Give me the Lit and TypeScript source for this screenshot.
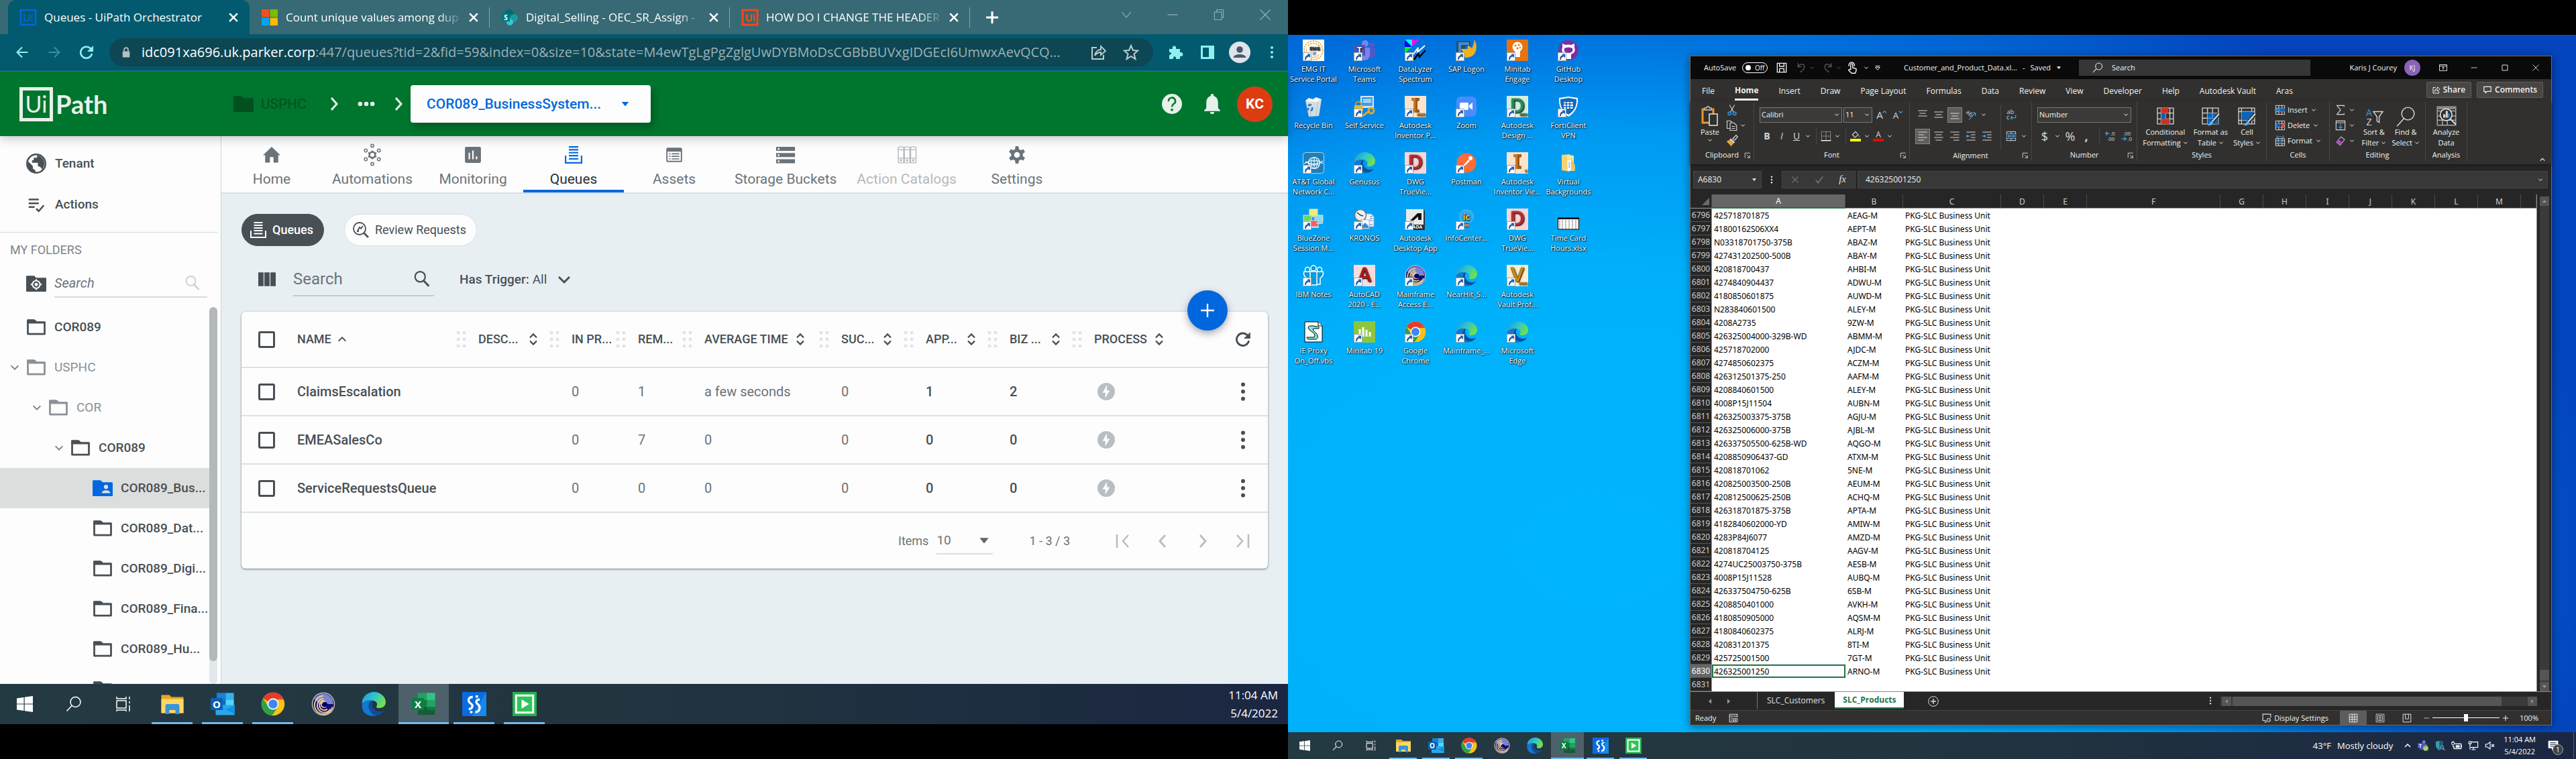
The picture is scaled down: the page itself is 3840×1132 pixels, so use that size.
import { LitElement, html, svg, css, nothing } from "lit";
import { customElement, property } from "lit/decorators.js";
import { classMap } from "lit/directives/class-map.js";

/* ------------------------------------------------------------------ icons */

const shape: Record<string, any> = {
  x: svg`<path d="M5 5L19 19M19 5L5 19" fill="none" stroke="currentColor" stroke-width="3"/>`,
  thinX: svg`<path d="M3 3L21 21M21 3L3 21" fill="none" stroke="currentColor" stroke-width="1.6"/>`,
  plus: svg`<path d="M12 3V21M3 12H21" fill="none" stroke="currentColor" stroke-width="3"/>`,
  thinPlus: svg`<path d="M12 2V22M2 12H22" fill="none" stroke="currentColor" stroke-width="2.4"/>`,
  min: svg`<path d="M3 12H21" stroke="currentColor" stroke-width="1.6"/>`,
  restore: svg`<path d="M4 7H17V21H4ZM8 7V3H20V17H17" fill="none" stroke="currentColor" stroke-width="1.4"/>`,
  max: svg`<path d="M4 4H20V20H4Z" fill="none" stroke="currentColor" stroke-width="1.8"/>`,
  winDown: svg`<path d="M4 7L12 17L20 7" fill="none" stroke="currentColor" stroke-width="1.4"/>`,
  down: svg`<path d="M4 8L12 16L20 8" fill="none" stroke="currentColor" stroke-width="3"/>`,
  up: svg`<path d="M4 16L12 8L20 16" fill="none" stroke="currentColor" stroke-width="3"/>`,
  right: svg`<path d="M8 3L16 12L8 21" fill="none" stroke="currentColor" stroke-width="3"/>`,
  left: svg`<path d="M16 3L8 12L16 21" fill="none" stroke="currentColor" stroke-width="3"/>`,
  first: svg`<path d="M21 3L13 12L21 21M4 2V22" fill="none" stroke="currentColor" stroke-width="2.6"/>`,
  last: svg`<path d="M3 3L11 12L3 21M20 2V22" fill="none" stroke="currentColor" stroke-width="2.6"/>`,
  sort: svg`<path d="M6 9L12 3L18 9M6 15L12 21L18 15" fill="none" stroke="currentColor" stroke-width="2.8"/>`,
  caret: svg`<path d="M3 7H21L12 18Z" fill="currentColor"/>`,
  caretUp: svg`<path d="M3 18H21L12 7Z" fill="currentColor"/>`,
  caretLeft: svg`<path d="M17 3V21L7 12Z" fill="currentColor"/>`,
  caretRight: svg`<path d="M7 3V21L17 12Z" fill="currentColor"/>`,
  back: svg`<path d="M22 12H3M12 3L3 12L12 21" fill="none" stroke="currentColor" stroke-width="2.4"/>`,
  forward: svg`<path d="M2 12H21M12 3L21 12L12 21" fill="none" stroke="currentColor" stroke-width="2.4"/>`,
  reload: svg`<path d="M20 14A8.5 8.5 0 1 1 18 6.5L21 9.5" fill="none" stroke="currentColor" stroke-width="2.6"/><path d="M22 2V11H13Z" fill="currentColor"/>`,
  lock: svg`<path d="M5 10H19V22H5Z" fill="currentColor"/><path d="M8 10V7A4 4 0 0 1 16 7V10" fill="none" stroke="currentColor" stroke-width="2.4"/>`,
  share: svg`<path d="M9 5H2V22H19V16" fill="none" stroke="currentColor" stroke-width="2"/><path d="M6 17C7 11 11 8 15 8V3L22 10L15 16V12C11 12 8 14 6 17Z" fill="none" stroke="currentColor" stroke-width="1.8"/>`,
  star: svg`<path d="M12 2L15 9L22 9.5L16.500 14.500L18.500 22L12 18L5.500 22L7.500 14.500L2 9.500L9 9Z" fill="none" stroke="currentColor" stroke-width="2"/>`,
  puzzle: svg`<path d="M3 7H8C6 1 15 1 13 7H19V12C25 11 25 19 19 18V22H13C14 17 8 17 9 22H3V16C7 16 7 11 3 12Z" fill="currentColor"/>`,
  sidepanel: svg`<path d="M2 2H22V22H2Z" fill="currentColor"/><path d="M5 5H14V19H5Z" fill="#035a6e"/>`,
  profile: svg`<circle cx="12" cy="12" r="12" fill="#dfe3ea"/><circle cx="12" cy="9" r="3.600" fill="#4d586c"/><path d="M5 18C5 13 19 13 19 18Z" fill="#4d586c"/>`,
  kebab: svg`<circle cx="12" cy="3.500" r="2.400" fill="currentColor"/><circle cx="12" cy="12" r="2.400" fill="currentColor"/><circle cx="12" cy="20.500" r="2.400" fill="currentColor"/>`,
  dots: svg`<circle cx="3.500" cy="12" r="3" fill="currentColor"/><circle cx="12" cy="12" r="3" fill="currentColor"/><circle cx="20.500" cy="12" r="3" fill="currentColor"/>`,
  help: svg`<circle cx="12" cy="12" r="12" fill="#e6f1ea"/><path d="M8 9A4 4 0 1 1 14 12C12.500 13 12 13.500 12 15.500" fill="none" stroke="#00752d" stroke-width="2"/><circle cx="12" cy="19" r="1.500" fill="#00752d"/>`,
  bell: svg`<path d="M12 0C14 0 13.500 2 14 2.500C18 4 19 7 19 11V17L21.500 19.500V20.500H2.500V19.500L5 17V11C5 7 6 4 10 2.500C10.500 2 10 0 12 0Z" fill="#e6f1ea"/><path d="M9.500 21.500H14.500A2.500 2.500 0 0 1 9.500 21.500Z" fill="#e6f1ea"/>`,
  folder: svg`<path d="M2 4H10L12 6H22V20H2Z" fill="none" stroke="currentColor" stroke-width="2.200" stroke-linejoin="round"/><path d="M1 3Q1 2.500 2 2.500H9.500L12 5.500H22V7.500H1Z" fill="currentColor"/>`,
  folderFill: svg`<path d="M0 3.500Q0 2.500 1 2.500H9.500L12 5H23Q24 5 24 6V20.500Q24 21.500 23 21.500H1Q0 21.500 0 20.500Z" fill="currentColor"/>`,
  folderUser: svg`<path d="M0 3.500Q0 2.500 1 2.500H9.500L12 5H23Q24 5 24 6V20.500Q24 21.500 23 21.500H1Q0 21.500 0 20.500Z" fill="#0067df"/><circle cx="16" cy="10.500" r="2.500" fill="#dcdddd"/><path d="M11 18C11 13.500 21 13.500 21 18Z" fill="#dcdddd"/>`,
  folderTarget: svg`<path d="M0 3.500Q0 2.500 1 2.500H9.500L12 5H23Q24 5 24 6V20.500Q24 21.500 23 21.500H1Q0 21.500 0 20.500Z" fill="currentColor"/><circle cx="12" cy="13" r="4.500" fill="none" stroke="#fdfdfd" stroke-width="1.500"/><circle cx="12" cy="13" r="2" fill="#fdfdfd"/><path d="M12 6.500V9M12 17V19.500M5.500 13H8M16 13H18.500" stroke="#fdfdfd" stroke-width="1.500"/>`,
  globe: svg`<circle cx="12" cy="12" r="11" fill="none" stroke="currentColor" stroke-width="2"/><path d="M2 9L8 15V18L11 20V23C5 22 1 17 2 9ZM13 2V5H9V8H7V11H14V15L17 16L19 19C24 13 22 4 13 2Z" fill="currentColor"/>`,
  actions: svg`<path d="M3 6H15M3 10.500H15M3 15H10" stroke="currentColor" stroke-width="2"/><path d="M12 17L15 20L21 13" fill="none" stroke="currentColor" stroke-width="2"/>`,
  search: svg`<circle cx="9.500" cy="9" r="7" fill="none" stroke="currentColor" stroke-width="2"/><path d="M14.500 14.500L21.500 22" stroke="currentColor" stroke-width="2.800"/>`,
  searchThin: svg`<circle cx="14.500" cy="9" r="7.500" fill="none" stroke="currentColor" stroke-width="1.500"/><path d="M9 14.500L1.500 22.500" stroke="currentColor" stroke-width="1.600"/>`,
  home: svg`<path d="M12 1L24 12.500H21V22.500H14.500V15H9.500V22.500H3V12.500H0Z" fill="currentColor"/>`,
  automations: svg`<circle cx="12" cy="12" r="4" fill="none" stroke="currentColor" stroke-width="2.400"/><path d="M12 6V8M12 16V18M6.500 9L9 10.500M15 13.500L17.500 15M6.500 15L9 13.500M15 10.500L17.500 9" stroke="currentColor" stroke-width="2"/><g fill="none" stroke="currentColor" stroke-width="1.400"><circle cx="12" cy="-0.500" r="2"/><circle cx="12" cy="24.500" r="2"/><circle cx="3" cy="6" r="2"/><circle cx="21" cy="6" r="2"/><circle cx="3" cy="18" r="2"/><circle cx="21" cy="18" r="2"/></g>`,
  monitoring: svg`<rect x="1" y="1" width="22" height="22" rx="2" fill="currentColor"/><path d="M7 9V18M12 6V18M17 14V18" stroke="#fdfdfd" stroke-width="2"/>`,
  queues: svg`<path d="M1 13V23H23V13" fill="none" stroke="currentColor" stroke-width="2"/><path d="M5.500 1H18.500M5.500 5H18.500M5.500 9H18.500M5.500 13H18.500M5.500 17.500H18.500" stroke="currentColor" stroke-width="2"/>`,
  assets: svg`<rect x="2" y="3" width="20" height="18" rx="1.500" fill="none" stroke="currentColor" stroke-width="1.800"/><path d="M2 3H22V7.500H2Z" fill="currentColor"/><path d="M5 10.500H7M5 14H7M5 17.500H7M8.500 10.500H19M8.500 14H19M8.500 17.500H19" stroke="currentColor" stroke-width="1.500"/>`,
  storage: svg`<path d="M-1 1H25V6.500H-1ZM-1 9.500H25V15H-1ZM-1 18H25V23.500H-1Z" fill="currentColor"/><path d="M1.500 2.500H3.500V5H1.500ZM1.500 11H3.500V13.500H1.500ZM1.500 19.500H3.500V22H1.500Z" fill="#fff"/>`,
  catalogs: svg`<g fill="none" stroke="currentColor" stroke-width="1.300"><rect x="0" y="1" width="7.500" height="22" rx="1"/><rect x="8.500" y="1" width="7.500" height="22" rx="1"/><rect x="17" y="1" width="7.500" height="22" rx="1"/><path d="M0 5H24M0 16.500H24"/><circle cx="3.700" cy="19.500" r="1"/><circle cx="12.200" cy="19.500" r="1"/><circle cx="20.700" cy="19.500" r="1"/></g>`,
  gear: svg`<path d="M10 0H14L14.700 4.200L17.200 5.600L20.800 4.200L23 8L20 10.300V13.700L23 16L20.800 19.800L17.200 18.400L14.700 19.800L14 24H10L9.300 19.800L6.800 18.400L3.200 19.800L1 16L4 13.700V10.300L1 8L3.200 4.200L6.800 5.600L9.300 4.200Z" fill="currentColor"/><circle cx="12" cy="12" r="4" fill="#fdfdfd"/>`,
  review: svg`<circle cx="10" cy="10" r="9" fill="none" stroke="currentColor" stroke-width="1.800"/><path d="M16.500 16.500L23 23" stroke="currentColor" stroke-width="2.600"/><path d="M7 13L10 8L12 10L15 6M6 14H8V12" fill="none" stroke="currentColor" stroke-width="1.800"/>`,
  columns: svg`<path d="M0 2H7.300V21H0ZM8.400 2H15.600V21H8.400ZM16.700 2H24V21H16.700Z" fill="currentColor"/>`,
  bolt: svg`<circle cx="12" cy="12" r="12" fill="#b9bec3"/><path d="M13 3L7 13.500H11L10.500 21L17 10.500H13Z" fill="#fdfdfd"/>`,
  uiBlue: svg`<rect x="1" y="1" width="22" height="22" fill="none" stroke="#0067df" stroke-width="2.500"/><text x="12" y="18" font-size="16" font-family="Lato, sans-serif" text-anchor="middle" fill="#0067df">Ui</text>`,
  uiRed: svg`<rect x="1" y="1" width="22" height="22" fill="none" stroke="#fa4616" stroke-width="3"/><text x="12" y="18" font-size="15" font-weight="700" font-family="Lato, sans-serif" text-anchor="middle" fill="#fa4616">Ui</text>`,
  ms: svg`<path d="M0 0H11.400V11.400H0Z" fill="#f25022"/><path d="M12.600 0H24V11.400H12.600Z" fill="#7fba00"/><path d="M0 12.600H11.400V24H0Z" fill="#00a4ef"/><path d="M12.600 12.600H24V24H12.600Z" fill="#ffb900"/>`,
  sharepoint: svg`<circle cx="11" cy="7" r="7" fill="#036c70"/><circle cx="18" cy="13" r="6" fill="#1a9ba1"/><circle cx="12" cy="19" r="5" fill="#37c6d0"/><rect x="0" y="6" width="12" height="12" rx="1" fill="#03787c"/><text x="6" y="16" font-size="10" font-weight="700" font-family="Open Sans, sans-serif" text-anchor="middle" fill="#fff">S</text>`,

  win: svg`<path d="M0 3.500L10.500 2V11.500H0ZM11.700 1.800L24 0V11.500H11.700ZM0 12.600H10.500V22L0 20.500ZM11.700 12.600H24V24L11.700 22.200Z" fill="#fff"/>`,
  taskview: svg`<path d="M3 7H17V18H3ZM3 1V4H17V1M3 23V21H17V23M22 1V5M22 8V11M22 14V23" fill="none" stroke="#fff" stroke-width="1.500"/>`,
  explorer: svg`<path d="M1 3H9L11 5H23V21H1Z" fill="#e9a820"/><path d="M1 7H23V21H1Z" fill="#ffd862"/><path d="M5 22V14Q5 12 7 12H17Q19 12 19 14V22H15V18H9V22Z" fill="#3b95dd"/>`,
  outlook: svg`<path d="M6 1H23V21H6Z" fill="#0f6cbd"/><path d="M6 1H15V8H6Z" fill="#1b80cf"/><path d="M15 1H23V8H15Z" fill="#35b1ee"/><path d="M15 8H23V14H15Z" fill="#50d9ff"/><path d="M5 13L24 13V22Q24 23 23 23H6Q5 23 5 22Z" fill="#28a8ea"/><path d="M5 13L24 22V13L14 18Z" fill="#1490df"/><rect x="0" y="6" width="12" height="12" rx="1" fill="#0a5fb4"/><text x="6" y="16" font-size="10" font-weight="700" font-family="Open Sans, sans-serif" text-anchor="middle" fill="#fff">O</text>`,
  chrome: svg`<circle cx="12" cy="12" r="11.500" fill="#fbc116"/><path d="M12 12L2 6.300A11.500 11.500 0 0 1 22 6.300H12Z" fill="#e33b2e"/><path d="M2 6.300A11.500 11.500 0 0 0 11 23.500L17 14.500L12 12L6.500 13.500Z" fill="#2da04a"/><path d="M12 6.300H22.200L22 7.500H12Z" fill="#e33b2e"/><circle cx="12" cy="12" r="5.600" fill="#fff"/><circle cx="12" cy="12" r="4.500" fill="#3f86f4"/>`,
  swirl: svg`<circle cx="12" cy="12" r="11.500" fill="#c3bcc2"/><circle cx="12" cy="12" r="10.500" fill="#10106e"/><path d="M3 7A10.500 10.500 0 0 1 21 7L22 12H8Z" fill="#7d84cf"/><g fill="none" stroke="#e8c98e" stroke-width="1.300"><path d="M21 15A9 9 0 1 1 12 4"/><path d="M19 17A7 7 0 1 1 12 6.500"/><path d="M16 17A4.800 4.800 0 1 1 13 8.500"/><path d="M15 14A2.800 2.800 0 1 1 14 10"/></g><circle cx="13.500" cy="12.500" r="2.500" fill="#00006e"/>`,
  edge: svg`<defs><linearGradient id="eg" x1="0" y1="0" x2="1" y2="0.500"><stop offset="0" stop-color="#1f8fdc"/><stop offset="0.500" stop-color="#2cc3d2"/><stop offset="1" stop-color="#6fe04f"/></linearGradient></defs><path d="M0.500 12C0 4 7 0 12 0C19 0 24 5 24 10C24 14 21 16 17.500 16C14 16 14.500 14.500 15.300 13.500C16 11 14 8.500 10.500 8.500C6 8.500 1 10 0.500 12Z" fill="url(#eg)"/><path d="M0.500 13C1 9.500 6 7.500 10 8.500C7.500 10 6.500 13 7.500 16.500C8.500 20.500 12 23 15 23.500C6 25.500 -0.500 20 0.500 13Z" fill="#1277d3"/><path d="M10 8.500C6.500 11 6.500 18 11 21.500C15 24.500 20 22.500 22.500 18.500C18.500 20.500 13.500 19.500 11.500 16C10 13.500 10 10.500 11.500 9Z" fill="#0d4f9c"/>`,
  excel: svg`<path d="M6 1H23V23H6Z" fill="#21a366"/><path d="M15 1H23V8H15Z" fill="#33c481"/><path d="M6 8H15V15H6Z" fill="#107c41"/><path d="M15 8H23V15H15Z" fill="#21a366"/><path d="M6 15H23V23H6Z" fill="#185c37"/><path d="M15 15H23V18H15Z" fill="#107c41"/><rect x="0" y="6" width="12" height="12" rx="1" fill="#107c41"/><text x="6" y="16" font-size="10" font-weight="700" font-family="Open Sans, sans-serif" text-anchor="middle" fill="#fff">X</text>`,
  assistant: svg`<rect width="24" height="24" fill="#0a6be0"/><path d="M24 0V24H10Z" fill="#1489ee"/><path d="M10.500 5C6 5 5 9 8.500 11.500C11.500 13.500 10 17 6.500 17" fill="none" stroke="#fff" stroke-width="2.200"/><path d="M17.500 7.500C13.500 7.500 13 10.500 15.800 12.500C18.500 15 17.500 20 13 20" fill="none" stroke="#fff" stroke-width="2.200"/><circle cx="14.500" cy="4.500" r="1.400" fill="#fff"/><circle cx="9" cy="20" r="1.400" fill="#fff"/>`,
  player: svg`<rect width="24" height="24" fill="#22b14c"/><rect x="3.500" y="3.500" width="17" height="17" fill="#2fc45c" stroke="#fff" stroke-width="2"/><path d="M9 7.500V16.500L16.500 12Z" fill="#fff"/>`,

  /* tray */
  trayTeams: svg`<circle cx="14" cy="4" r="3.500" fill="#7b83eb"/><rect x="4" y="8" width="17" height="13" rx="3" fill="#5059c9"/><rect x="0" y="6" width="12" height="12" rx="1" fill="#4b53bc"/><text x="6" y="16" font-size="10" font-weight="700" font-family="Open Sans, sans-serif" text-anchor="middle" fill="#fff">T</text><circle cx="18" cy="18" r="6" fill="#92c353"/><path d="M15 18L17.500 20.500L21 16" fill="none" stroke="#fff" stroke-width="1.500"/>`,
  trayShield: svg`<path d="M3 3Q10 0 19 3V12Q18 19 11 23Q4 19 3 12Z" fill="#2f9fb5"/><path d="M11 1.500Q15 1.500 19 3V12Q18 19 11 23Z" fill="#155f74"/><circle cx="17" cy="16" r="3.500" fill="none" stroke="#9ad" stroke-width="1.500"/><path d="M19.500 18.500L23 22" stroke="#9ad" stroke-width="2"/>`,
  battery: svg`<path d="M8 8H22V19H6V13M23 11V16" fill="none" stroke="#fff" stroke-width="1.800"/><path d="M10 11H19V17H10Z" fill="#fff"/><path d="M1 5H7V9Q4 12 1 9ZM2.500 2V5M5.500 2V5M4 10V15H6" fill="none" stroke="#fff" stroke-width="1.500"/>`,
  network: svg`<path d="M6 4H22V16H6M12 16V21M8 21H17M2 3H7V8H2ZM4.500 8V21" fill="none" stroke="#fff" stroke-width="1.700"/>`,
  mute: svg`<path d="M2 9H6L12 4V20L6 15H2Z" fill="none" stroke="#fff" stroke-width="1.700"/><path d="M15 9L21 15M21 9L15 15" stroke="#fff" stroke-width="1.700"/>`,
  notif: svg`<path d="M1 1H23V18H14L9 23V18H1Z" fill="#fff"/><path d="M5 5.500H19M5 9.500H19M5 13.500H15" stroke="#1b2a3c" stroke-width="1.600"/>`,

  /* excel */
  save: svg`<path d="M2 2H22V22H2ZM7 22V14H17V22M7 2V9H17V2" fill="none" stroke="currentColor" stroke-width="2"/>`,
  undo: svg`<path d="M5 2V10H13M5 10C9 2 20 3 19 10C19 15 15 19 9 22" fill="none" stroke="currentColor" stroke-width="2"/>`,
  redo: svg`<path d="M19 2V10H11M19 10C15 2 4 3 5 10C5 15 9 19 15 22" fill="none" stroke="currentColor" stroke-width="2"/>`,
  touch: svg`<path d="M9 16V6Q9 4 11 4Q13 4 13 6V12L20 14V18L18 23H11L5 17Q6 14 9 16M6 9A5.500 5.500 0 1 1 16 9" fill="none" stroke="currentColor" stroke-width="1.900"/>`,
  qat: svg`<path d="M4 6H20" stroke="currentColor" stroke-width="2.600"/><path d="M4 11H20L12 20Z" fill="none" stroke="currentColor" stroke-width="2.200"/>`,
  ribbonMode: svg`<path d="M1 3H23V21H1ZM1 7H23M12 18V10M8.500 13L12 10L15.500 13" fill="none" stroke="currentColor" stroke-width="1.800"/>`,
  comment: svg`<path d="M3 4H21V16H11L7 20V16H3Z" fill="none" stroke="currentColor" stroke-width="2"/>`,
  paste: svg`<path d="M3 5H19V25H3Z" fill="none" stroke="#e8962e" stroke-width="3"/><path d="M6 6V3H9C9 0 13 0 13 3H16V6Z" fill="#31302e" stroke="#c8c6c4" stroke-width="1.300"/><path d="M13 12H25V29H13Z" fill="#31302e" stroke="#e8e6e4" stroke-width="1.500"/>`,
  cut: svg`<path d="M7 2L15 16M17 2L9 16" stroke="#d8d6d4" stroke-width="1.500"/><circle cx="7" cy="19" r="3" fill="none" stroke="#3a96dd" stroke-width="2"/><circle cx="17" cy="19" r="3" fill="none" stroke="#3a96dd" stroke-width="2"/>`,
  copy: svg`<path d="M8 18H2V3H9L12 6M8 7H16L21 12V22H8ZM11 14H18M11 18H18" fill="none" stroke="#d8d6d4" stroke-width="1.500"/>`,
  painter: svg`<path d="M13 8L20 1L23 4L17 11Z" fill="none" stroke="#d8d6d4" stroke-width="1.700"/><path d="M9 7L18 15L15 17L7 10Z" fill="#d8d6d4"/><path d="M7 10L1 13L10 23L15 17Z" fill="#e8a33e"/>`,
  growA: svg`<text x="9" y="21" font-size="23" font-family="Open Sans, sans-serif" text-anchor="middle" fill="#d8d6d4">A</text><path d="M16 8L20 4L24 8" fill="none" stroke="#3a96dd" stroke-width="2"/>`,
  shrinkA: svg`<text x="9" y="21" font-size="20" font-family="Open Sans, sans-serif" text-anchor="middle" fill="#d8d6d4">A</text><path d="M16 4L20 8L24 4" fill="none" stroke="#3a96dd" stroke-width="2"/>`,
  borders: svg`<path d="M2 2H22M2 12H22M2 2V22M12 2V22M22 2V22" fill="none" stroke="#d8d6d4" stroke-width="1.500" stroke-dasharray="1.500 1.500"/><path d="M1 22H23" stroke="#fff" stroke-width="2"/>`,
  fill: svg`<path d="M5 9L12 2L18 9L11 15Z" fill="none" stroke="#d8d6d4" stroke-width="1.600"/><path d="M17 9Q22 12 20 15" fill="none" stroke="#3a96dd" stroke-width="2"/><path d="M0 18H24V24H0Z" fill="#ff0"/>`,
  fontColor: svg`<text x="12" y="15" font-size="18" font-family="Open Sans, sans-serif" text-anchor="middle" fill="#d8d6d4">A</text><path d="M0 18H24V24H0Z" fill="#f00"/>`,
  alTop: svg`<path d="M2 3H22M5 9H19M2 15H22" stroke="#d8d6d4" stroke-width="1.600"/>`,
  alMid: svg`<path d="M2 6H22M5 12H19M2 18H22" stroke="#d8d6d4" stroke-width="1.600"/>`,
  alBot: svg`<path d="M2 9H22M5 15H19M2 21H22" stroke="#d8d6d4" stroke-width="1.600"/>`,
  alLeft: svg`<path d="M2 3H22M2 9H15M2 15H22M2 21H15" stroke="#d8d6d4" stroke-width="1.600"/>`,
  alCenter: svg`<path d="M2 3H22M5 9H19M2 15H22M5 21H19" stroke="#d8d6d4" stroke-width="1.600"/>`,
  alRight: svg`<path d="M2 3H22M9 9H22M2 15H22M9 21H22" stroke="#d8d6d4" stroke-width="1.600"/>`,
  outdent: svg`<path d="M2 3H22M12 9H22M12 15H22M2 21H22" stroke="#d8d6d4" stroke-width="1.600"/><path d="M10 12H2M5 9L2 12L5 15" fill="none" stroke="#3a96dd" stroke-width="2"/>`,
  indent: svg`<path d="M2 3H22M12 9H22M12 15H22M2 21H22" stroke="#d8d6d4" stroke-width="1.600"/><path d="M1 12H9M6 9L9 12L6 15" fill="none" stroke="#3a96dd" stroke-width="2"/>`,
  orient: svg`<text x="8" y="13" font-size="13" font-family="Open Sans, sans-serif" text-anchor="middle" fill="#d8d6d4" transform="rotate(45 8 10)">ab</text><path d="M8 23L22 8M15 8H22V15" fill="none" stroke="#3a96dd" stroke-width="2"/>`,
  wrap: svg`<text x="10" y="11" font-size="14" font-family="Open Sans, sans-serif" text-anchor="middle" fill="#d8d6d4">ab</text><text x="5" y="23" font-size="14" font-family="Open Sans, sans-serif" text-anchor="middle" fill="#d8d6d4">c</text><path d="M22 12V19H12M15 15L11 19L15 23" fill="none" stroke="#3a96dd" stroke-width="2"/>`,
  merge: svg`<path d="M2 2H22V22H2ZM2 7H22M2 17H22M12 2V7M12 17V22" fill="none" stroke="#d8d6d4" stroke-width="1.500"/><path d="M2 7H22V17H2Z" fill="#1b4d78"/><path d="M5 12H19M8 9.500L5 12L8 14.500M16 9.500L19 12L16 14.500" fill="none" stroke="#5ab4f5" stroke-width="1.500"/>`,
  incDec: svg`<text x="17" y="11" font-size="12" font-family="Open Sans, sans-serif" text-anchor="middle" fill="#d8d6d4">.0</text><text x="13" y="23" font-size="12" font-family="Open Sans, sans-serif" text-anchor="middle" fill="#d8d6d4">.00</text><path d="M10 6H1M5 2L1 6L5 10" fill="none" stroke="#3a96dd" stroke-width="2"/>`,
  decDec: svg`<text x="13" y="11" font-size="12" font-family="Open Sans, sans-serif" text-anchor="middle" fill="#d8d6d4">.00</text><text x="19" y="23" font-size="12" font-family="Open Sans, sans-serif" text-anchor="middle" fill="#d8d6d4">.0</text><path d="M1 18H11M7 14L11 18L7 22" fill="none" stroke="#3a96dd" stroke-width="2"/>`,
  condFmt: svg`<path d="M1 1H23V23H1ZM1 8H23M1 16H23M6 1V23M12 1V23M18 1V23" fill="none" stroke="#d8d6d4" stroke-width="1.200"/><path d="M6 1H16V8H6ZM6 16H18V23H6Z" fill="#d92b1f"/><path d="M6 8H12V16H6Z" fill="#0a64b8"/>`,
  fmtTable: svg`<path d="M1 1H23V23H1ZM1 8H23M1 15H23M8 1V23M15 1V23" fill="none" stroke="#d8d6d4" stroke-width="1.200"/><path d="M8 8H23V23H8Z" fill="#0a64b8"/><path d="M8 15H23M15 8V23" stroke="#5ab4f5" stroke-width="1"/><path d="M24 9L14 21" stroke="#31302e" stroke-width="5"/><path d="M24 9L14 20" stroke="#d8d6d4" stroke-width="2"/><path d="M14 19L16 22Q13 26 8 25Q11 23 11 21Z" fill="#5ab4f5"/>`,
  cellStyles: svg`<path d="M1 1H23V23H1ZM1 6H23M1 18H23M5 1V23M19 1V23" fill="none" stroke="#d8d6d4" stroke-width="1.200"/><path d="M5 6H22V18H5Z" fill="#0a64b8"/><path d="M24 9L14 21" stroke="#31302e" stroke-width="5"/><path d="M24 9L14 20" stroke="#d8d6d4" stroke-width="2"/><path d="M14 19L16 22Q13 26 8 25Q11 23 11 21Z" fill="#5ab4f5"/>`,
  insCells: svg`<path d="M2 2H22V22H2ZM2 8H22M2 16H22M9 2V22M16 2V22" fill="none" stroke="#d8d6d4" stroke-width="1.500"/><path d="M9 8H23V16H9Z" fill="#0a64b8"/><path d="M12 12H1M5 8L1 12L5 16" fill="none" stroke="#3a96dd" stroke-width="2"/>`,
  delCells: svg`<path d="M2 2H22V22H2ZM2 8H22M2 16H22M9 2V22M16 2V22" fill="none" stroke="#d8d6d4" stroke-width="1.500"/><path d="M3 8H12V16H3Z" fill="#0a64b8"/><path d="M13 7L23 17M23 7L13 17" stroke="#e0453a" stroke-width="2.400"/>`,
  fmtCells: svg`<path d="M2 7H22V23H2ZM2 12H22M2 18H22M8 7V23M16 7V23" fill="none" stroke="#d8d6d4" stroke-width="1.500"/><path d="M8 12H16V18H8Z" fill="#0a64b8"/><path d="M5 3H19M5 0V6M19 0V6" stroke="#3a96dd" stroke-width="1.800"/>`,
  sum: svg`<path d="M20 5V2H4L12 12L4 22H20V19" fill="none" stroke="#d8d6d4" stroke-width="1.800"/>`,
  fillDown: svg`<path d="M2 2H22V22H2ZM2 6H22" fill="none" stroke="#d8d6d4" stroke-width="1.700"/><path d="M12 8V19M8 15L12 19L16 15" fill="none" stroke="#3a96dd" stroke-width="2"/>`,
  eraser: svg`<path d="M3 15L13 3L21 9L11 22Z" fill="none" stroke="#d8a8dc" stroke-width="1.700"/><path d="M3 15L8 9L16 16L11 22Z" fill="#b146c2"/>`,
  sortFilter: svg`<text x="5" y="12" font-size="13" font-family="Open Sans, sans-serif" text-anchor="middle" fill="#3a96dd">A</text><text x="5" y="25" font-size="13" font-family="Open Sans, sans-serif" text-anchor="middle" fill="#d8d6d4">Z</text><path d="M11 6H24L19 13V21L16 19V13Z" fill="none" stroke="#d8d6d4" stroke-width="1.300"/>`,
  find: svg`<circle cx="15" cy="9" r="8" fill="none" stroke="#d8d6d4" stroke-width="1.200"/><path d="M10 15L1 25" stroke="#d8d6d4" stroke-width="1.300"/>`,
  analyze: svg`<path d="M1 1H23V23H1ZM1 6H23M1 17H23M7 17V23M13 17V23M1 12H6M18 12H23" fill="none" stroke="#a8a6a4" stroke-width="1.200"/><path d="M1 1H23V4H1Z" fill="#8a8886"/><circle cx="11.500" cy="10.500" r="7" fill="#31302e" stroke="#e0dedc" stroke-width="1.300"/><path d="M16.500 15.500L23 22" stroke="#e0dedc" stroke-width="1.600"/><path d="M8 10H10.500V14H8ZM11 6H13.500V14H11Z" fill="#d8d6d4"/><path d="M13.500 9H15.500V14H13.500Z" fill="#2b88d8"/>`,
  launcher: svg`<path d="M3 20V3H21M10 10L20 20M20 11V20H11" fill="none" stroke="#d8d6d4" stroke-width="2.200"/>`,
  check: svg`<path d="M3 13L9 20L21 4" fill="none" stroke="currentColor" stroke-width="3.400"/>`,
  cancel: svg`<path d="M3 3L21 21M21 3L3 21" fill="none" stroke="currentColor" stroke-width="3"/>`,
  selectAll: svg`<path d="M24 2V24H2Z" fill="#6a6a6a"/>`,
  addSheet: svg`<circle cx="12" cy="12" r="11" fill="none" stroke="#e0e0e0" stroke-width="1.500"/><path d="M12 6V18M6 12H18" stroke="#e0e0e0" stroke-width="2.200"/>`,
  macro: svg`<path d="M2 2H22V10M2 2V22H12M2 7H22M5 12H11M5 17H11" fill="none" stroke="#e0e0e0" stroke-width="1.800"/><circle cx="17" cy="17" r="5" fill="none" stroke="#e0e0e0" stroke-width="1.800"/><circle cx="17" cy="17" r="2" fill="#e0e0e0"/>`,
  display: svg`<path d="M11 18H2V2H22V11M6 22H12" fill="none" stroke="#e0e0e0" stroke-width="1.900"/><circle cx="17" cy="17" r="4" fill="none" stroke="#e0e0e0" stroke-width="2.600" stroke-dasharray="2.500 1"/>`,
  vNormal: svg`<path d="M2 2H22V22H2ZM2 9H22M2 15H22M9 2V22M15 2V22" fill="none" stroke="#f0f0f0" stroke-width="1.600"/>`,
  vLayout: svg`<path d="M2 2H22V22H2ZM6 6H18V18H6ZM9 9H15M9 12H15M9 15H15" fill="none" stroke="#e0e0e0" stroke-width="1.500"/>`,
  vBreak: svg`<path d="M2 2H22V22H2ZM8 2V14H16V2" fill="none" stroke="#e0e0e0" stroke-width="1.700"/>`,
};

const ico = (name: string, size = "s24") => html`<svg
  class="ico ${size}"
  viewBox=${name === "paste" ? "0 0 28 30" : "0 0 24 24"}
  overflow="visible"
  aria-hidden="true"
>${shape[name]}</svg>`;

/* Square tile with a bold letter and a short corner tag, as used by the CAD tools. */
const tile = (bg: string, fg: string, letter: string, tag = "") => svg`
  <rect width="32" height="32" fill="${bg}"/>
  <text x="16" y="25" font-size="28" font-weight="700" font-family="Lato, sans-serif" text-anchor="middle" fill="${fg}">${letter}</text>
  <text x="31" y="30" font-size="6" font-weight="700" font-family="Open Sans, sans-serif" text-anchor="end" fill="${fg}">${tag}</text>`;

const inventor = (tag: string) => svg`
  <rect width="32" height="32" fill="#fbe3cc"/><path d="M10 3H22V7L19 8V20L22 21V25H10V21L13 20V8L10 7Z" fill="#c77a2a"/><path d="M16 3H22V7L19 8V20L22 21V25H16Z" fill="#9c5a17"/>
  <text x="31" y="30" font-size="6" font-weight="700" font-family="Open Sans, sans-serif" text-anchor="end" fill="#e07b1a">${tag}</text>`;

const big = (name: string) => svg`<g transform="scale(1.3333)">${shape[name]}</g>`;

const app: Record<string, any> = {
  emg: svg`<rect width="32" height="32" fill="#fff"/><g fill="none" stroke="#f0a92d" stroke-width="1.500" stroke-dasharray="3 1"><circle cx="16" cy="16" r="14"/><circle cx="16" cy="16" r="10.500"/></g><rect x="6" y="10" width="22" height="12" fill="#fff"/><text x="18" y="16" font-size="7" font-weight="700" font-family="Open Sans, sans-serif" text-anchor="middle" fill="#333">EMG</text><text x="17" y="23" font-size="6" font-family="Open Sans, sans-serif" text-anchor="middle" fill="#2a6fb0">IT</text>`,
  teams: svg`<circle cx="17" cy="6" r="5" fill="#7b83eb"/><circle cx="27" cy="8" r="4" fill="#5059c9"/><path d="M9 12H24V24Q22 31 16 31Q10 31 9 24Z" fill="#7b83eb"/><path d="M24 13H32V23Q31 28 24 28Z" fill="#5059c9"/><rect x="0" y="8" width="17" height="16" rx="1" fill="#4b53bc"/><text x="8.500" y="20" font-size="13" font-weight="700" font-family="Open Sans, sans-serif" text-anchor="middle" fill="#fff">T</text>`,
  datalyzer: svg`<path d="M0 0H11V11Z" fill="#0ff"/><path d="M11 0H22L11 10Z" fill="#f0f"/><path d="M0 0L11 11H0Z" fill="#00f"/><path d="M0 11H11L0 20Z" fill="#0f0"/><path d="M9 27L20 12L19 19L30 9" fill="none" stroke="#fff" stroke-width="2"/><path d="M14 30L20 21L22 26L31 16" fill="none" stroke="#000" stroke-width="2.500"/>`,
  sap: svg`<path d="M1 2H22V10H14V25H1Z" fill="#1d4e7c"/><path d="M4 4H20V8H8V22H4Z" fill="#4c8cc0"/><path d="M28 0Q34 12 28 21Q24 27 14 27L10 18L8 14H18V8L24 13Q27 8 28 0Z" fill="#f2b01e"/>`,
  engage: svg`<rect width="32" height="32" fill="#e8720c"/><circle cx="16" cy="11" r="7.500" fill="#fff"/><path d="M12 17H20V26H12Z" fill="#fff"/><g fill="#e8720c"><circle cx="13" cy="9" r="1.500"/><circle cx="18" cy="8" r="1.500"/><circle cx="16" cy="13" r="1.500"/><circle cx="20" cy="12" r="1.200"/></g>`,
  github: svg`<circle cx="16" cy="16" r="15" fill="#7b2fa0"/><path d="M7 6L12 8Q16 7 20 8L25 6V12Q28 19 20 22V29H12V22Q4 19 7 12Z" fill="#fff"/><path d="M10 13Q16 10 22 13Q24 20 16 20Q8 20 10 13Z" fill="#7b2fa0"/>`,
  bin: svg`<path d="M4 7L28 5L24 30L9 31Z" fill="#d5dde2"/><path d="M4 7L9 3L15 5L20 2L28 5L22 9L10 9Z" fill="#f4f7f8"/><path d="M10 9L12 31M22 9L20 30" stroke="#b4bfc6" stroke-width="1"/><path d="M8 15Q10 12 13 14M14 17Q15 21 12 22M9 21Q7 20 8 18" fill="none" stroke="#1f7ad0" stroke-width="2.500"/>`,
  selfservice: svg`<rect x="10" y="0" width="20" height="18" fill="#d6e6f5"/><rect x="12" y="2" width="16" height="13" fill="#3f9fe4"/><path d="M14 6H26M14 9H26" stroke="#fff" stroke-width="1.500"/><path d="M3 14V11Q7 6 11 11V14" fill="none" stroke="#c99a2c" stroke-width="2"/><rect x="1" y="14" width="13" height="9" fill="#e5b73b"/><path d="M13 30L24 22" stroke="#e0a52c" stroke-width="3"/><circle cx="26" cy="22" r="4" fill="none" stroke="#e0a52c" stroke-width="3"/>`,
  invPro: inventor("PRO"),
  zoom: svg`<rect x="1" y="1" width="30" height="30" rx="7" fill="#4a8cff"/><rect x="6" y="10" width="13" height="11" rx="2" fill="#fff"/><path d="M20 14L25 10V21L20 17Z" fill="#fff"/>`,
  design: tile("#d3f0df", "#1f8f5a", "D", "REV"),
  forti: svg`<path d="M2 3L16 1L30 3Q31 22 16 31Q1 22 2 3Z" fill="#fff"/><path d="M4 5L16 3L28 5Q29 20 16 28Q3 20 4 5Z" fill="#1568b8"/><rect x="9" y="9" width="14" height="10" rx="2" fill="#fff"/><path d="M9 12H23M9 16H23M13 9V19M18 9V19" stroke="#1568b8" stroke-width="1.500"/>`,
  att: svg`<rect x="0.500" y="0.500" width="31" height="31" rx="4" fill="#1f7fb8" stroke="#b8d4e4"/><circle cx="17" cy="16" r="8.500" fill="none" stroke="#fff" stroke-width="1.200"/><path d="M17 7.500V24.500M9 13H25M9 19H25M2 17Q17 8 30 17M4 14Q17 22 30 13" fill="none" stroke="#fff" stroke-width="1.200"/><ellipse cx="17" cy="16" rx="4.500" ry="8.500" fill="none" stroke="#fff"/>`,
  edge: big("edge"),
  dwg: tile("#f8d5d6", "#c3272f", "D"),
  postman: svg`<circle cx="16" cy="16" r="14.500" fill="#ff6c37"/><path d="M10 21L19 11L21 13L13 21Z" fill="#fff"/><circle cx="22" cy="9" r="3" fill="#fff"/>`,
  invView: inventor("V"),
  folderDocs: svg`<path d="M6 4L18 3V29L6 27Z" fill="#f4d274"/><path d="M14 4L24 5V28L14 27Z" fill="#ffe599"/><path d="M15 13L20 12V27L15 28Z" fill="#fff"/><path d="M16 16H19M16 19H19M16 22H19" stroke="#3a8fd0"/><path d="M20 8L26 20V28L20 26Z" fill="#e9c35c"/>`,
  bluezone: svg`<rect x="10" y="1" width="12" height="10" fill="#f3ee6a" stroke="#ddd"/><rect x="1" y="10" width="12" height="9" fill="#6fd65f" stroke="#ddd"/><rect x="18" y="10" width="12" height="10" fill="#7fe0ee" stroke="#ddd"/><rect x="11" y="18" width="12" height="9" fill="#f0606a" stroke="#ddd"/><path d="M12 28H24M20 22H30M12 12H20" stroke="#ccc" stroke-width="2"/>`,
  kronos: svg`<path d="M17 8H26L30 12V27H17Z" fill="#eef3f8" stroke="#9ab"/><path d="M24 12H28M24 15H28M24 18H28M19 24H28" stroke="#4a7fc0"/><circle cx="10" cy="10" r="8.500" fill="#eceef0" stroke="#777" stroke-width="1.500"/><path d="M10 10L5 6M10 10L14 11" stroke="#333" stroke-width="1.500"/><rect x="11" y="17" width="12" height="13" fill="#fff" stroke="#aac"/><path d="M12 26L17 21L22 26V29H12Z" fill="#3c8bd6"/>`,
  ada: svg`<path d="M2 1H28V24H2Z" fill="#e9e9e9"/><path d="M28 1L30 4V32H4L2 24H28Z" fill="#333"/><path d="M8 18L19 7H25V17H20V12L13 18Z" fill="#111"/><text x="19" y="30" font-size="7" font-weight="700" font-family="Open Sans, sans-serif" text-anchor="middle" fill="#fff">ADA</text>`,
  infocenter: svg`<circle cx="16" cy="12" r="11" fill="#52b9ee" opacity="0.700"/><circle cx="16" cy="12" r="9" fill="#35a9e8"/><path d="M13 22H20V28H13Z" fill="#444"/><path d="M13 24H20M13 26H20" stroke="#ddd"/><text x="16" y="17" font-size="14" font-weight="700" font-family="Lato, sans-serif" text-anchor="middle" fill="#fbd13a">ic</text>`,
  timecard: svg`<rect x="0.500" y="14" width="31" height="17" fill="#fff" stroke="#000"/><path d="M0 15H32" stroke="#000" stroke-width="2"/><path d="M7 17V31M12 17V31M17 17V31M22 17V31M27 17V31M3 17V31" stroke="#666" stroke-width="1.500" stroke-dasharray="1 1"/>`,
  notes: svg`<g fill="#0b9bd8" stroke="#fff" stroke-width="1.500"><path d="M2 10Q0 16 6 20V29H12V10Z"/><path d="M30 10Q32 16 26 20V29H20V10Z"/><circle cx="7" cy="7" r="3.500"/><circle cx="25" cy="7" r="3.500"/><path d="M11 10H21V30H11Z"/><circle cx="16" cy="5" r="4"/></g>`,
  autocad: tile("#f7dcdc", "#b3141b", "A"),
  swirl: big("swirl"),
  vault: tile("#fdeccb", "#c98a12", "V", "PRO"),
  script: svg`<path d="M3 1H23L29 7V31H3Z" fill="#fff" stroke="#000"/><path d="M23 1V7H29" fill="#fff" stroke="#000"/><path d="M21 8Q8 5 8 10Q9 13 14 16Q20 20 17 24H6Q6 28 12 27H20Q25 24 20 18Q13 12 16 11H24Q25 8 21 8Z" fill="#7fe6e6" stroke="#000"/>`,
  minitab: svg`<rect width="32" height="32" fill="#8cc63f"/><path d="M9 12V23M14 9V23M19 13V23M24 16V23" stroke="#fff" stroke-width="3"/>`,
  chrome: big("chrome"),
};

const base = css`
  * { box-sizing: border-box; }
  button, input, select { font: inherit; color: inherit; background: none; border: 0; padding: 0; margin: 0; }
  a { color: inherit; text-decoration: none; }
  .ico { display: block; flex: none; }
  .s8 { width: 8px; height: 8px; }
  .s10 { width: 10px; height: 10px; }
  .s12 { width: 12px; height: 12px; }
  .s14 { width: 14px; height: 14px; }
  .s16 { width: 16px; height: 16px; }
  .s18 { width: 18px; height: 18px; }
  .s20 { width: 20px; height: 20px; }
  .s24 { width: 24px; height: 24px; }
  .s26 { width: 26px; height: 26px; }
  .s28 { width: 28px; height: 28px; }
  .s30 { width: 30px; height: 30px; }
  .s32 { width: 32px; height: 32px; }
  .s36 { width: 36px; height: 36px; }
`;

/* ---------------------------------------------------------------- browser */

@customElement("browser-chrome")
export class BrowserChrome extends LitElement {
  static styles = [base, css`
    :host { display: block; font: 17px/24px "Open Sans", sans-serif; color: #fff; }
    .tabs { display: flex; height: 51px; padding-left: 12px; background: #376a74; }
    .tab { display: flex; align-items: center; gap: 12px; width: 358px; padding: 0 14px 0 18px; text-align: left; position: relative; }
    .tab.active { width: 360px; background: #035a6e; border-radius: 12px 12px 0 0; }
    .tab:not(.active)::after { content: ""; position: absolute; right: 0; top: 11px; height: 30px; width: 1px; background: #86a5ab; }
    .tab .t { flex: 1; white-space: nowrap; min-width: 0; }
    .tab .fade { mask-image: linear-gradient(90deg, #000 88%, rgba(0, 0, 0, 0.2)); }
    .new { width: 66px; display: flex; align-items: center; justify-content: center; }
    .win { margin-left: auto; display: flex; color: #8fabb0; }
    .win button { width: 69px; height: 43px; display: flex; align-items: center; justify-content: center; }
    .bar { display: flex; align-items: center; height: 54px; background: #035a6e; color: #8ff0f0; padding-left: 9px; }
    .bar > button { width: 48px; height: 48px; display: flex; align-items: center; justify-content: center; }
    .bar .dim { color: #3c8f9d; }
    .omni { flex: 1; min-width: 0; height: 42px; margin-left: 10px; margin-right: 9px; border-radius: 21px; background: #0d4754; display: flex; align-items: center; color: #b5bfc4; padding: 0 9px 0 16px; }
    .omni button { width: 48px; display: flex; justify-content: center; color: #c0ccd0; }
    .url { flex: 1; min-width: 0; margin-left: 14px; font-size: 20px; line-height: 30px; white-space: nowrap; color: #9db1b6; }
    .url b { font-weight: 400; color: #fff; }
    .line { height: 2px; background: #1f7487; }
  `];
  render() {
    const tabs: [string, string][] = [
      ["uiBlue", "Queues - UiPath Orchestrator"],
      ["ms", "Count unique values among dupl"],
      ["sharepoint", "Digital_Selling - OEC_SR_Assign -"],
      ["uiRed", "HOW DO I CHANGE THE HEADER"],
    ];
    return html`
      <div class="tabs" role="tablist">
        ${tabs.map(([i, t], n) => html`<div class=${classMap({ tab: true, active: n === 0 })} role="tab">
          ${ico(i, "s24")}<span class="t ${n ? "fade" : ""}">${t}</span><button aria-label="Close tab">${ico("x", "s20")}</button></div>`)}
        <button class="new" aria-label="New tab">${ico("plus", "s24")}</button>
        <div class="win">
          ${["winDown", "min", "restore", "thinX"].map((i) => html`<button aria-label=${i}>${ico(i, "s20")}</button>`)}
        </div>
      </div>
      <div class="bar">
        <button aria-label="Back">${ico("back", "s20")}</button>
        <button class="dim" aria-label="Forward">${ico("forward", "s20")}</button>
        <button aria-label="Reload">${ico("reload", "s24")}</button>
        <div class="omni">
          ${ico("lock", "s18")}
          <a class="url" href="#"><b>idc091xa696.uk.parker.corp</b>:447/queues?tid=2&amp;fid=59&amp;index=0&amp;size=10&amp;state=M4ewTgLgPgZglgUwDYBMoDsCGBbBUVxgIDGEcI6UmwxAevQCQ...</a>
          <button aria-label="Share">${ico("share", "s24")}</button>
          <button aria-label="Bookmark">${ico("star", "s24")}</button>
        </div>
        <button aria-label="Extensions">${ico("puzzle", "s24")}</button>
        <button aria-label="Side panel">${ico("sidepanel", "s24")}</button>
        <button aria-label="Profile">${ico("profile", "s32")}</button>
        <button aria-label="Menu">${ico("kebab", "s20")}</button>
      </div>
      <div class="line"></div>`;
  }
}

/* ----------------------------------------------------------- orchestrator */

interface Column { key: string; label: string; width: number; sort?: string }

const columns: Column[] = [
  { key: "name", label: "NAME", width: 270, sort: "up" },
  { key: "desc", label: "DESC...", width: 139, sort: "sort" },
  { key: "inProgress", label: "IN PR...", width: 99 },
  { key: "remaining", label: "REM...", width: 99 },
  { key: "average", label: "AVERAGE TIME", width: 204, sort: "sort" },
  { key: "success", label: "SUC...", width: 126, sort: "sort" },
  { key: "app", label: "APP...", width: 125, sort: "sort" },
  { key: "biz", label: "BIZ ...", width: 126, sort: "sort" },
  { key: "process", label: "PROCESS", width: 0, sort: "sort" },
];

const queues = [
  { name: "ClaimsEscalation", inProgress: "0", remaining: "1", average: "a few seconds", success: "0", app: "1", biz: "2" },
  { name: "EMEASalesCo", inProgress: "0", remaining: "7", average: "0", success: "0", app: "0", biz: "0" },
  { name: "ServiceRequestsQueue", inProgress: "0", remaining: "0", average: "0", success: "0", app: "0", biz: "0" },
];

const tree: [number, string, string, boolean][] = [
  [0, "COR089", "folder", false],
  [0, "USPHC", "muted", true],
  [1, "COR", "muted", true],
  [2, "COR089", "folder", true],
  [3, "COR089_Bus...", "selected", false],
  [3, "COR089_Dat...", "folder", false],
  [3, "COR089_Digi...", "folder", false],
  [3, "COR089_Fina...", "folder", false],
  [3, "COR089_Hu...", "folder", false],
  [3, "", "folder", false],
];

@customElement("orchestrator-page")
export class OrchestratorPage extends LitElement {
  static styles = [base, css`
    :host { display: flex; flex-direction: column; min-height: 0; font: 21px/28px Roboto, sans-serif; color: #484f55; background: #e8eff3; }
    header { display: flex; align-items: center; height: 96px; flex: none; padding: 0 23px 0 29px; background: #00752d; position: relative; z-index: 2; box-shadow: 0 4px 14px rgba(0, 0, 0, 0.22); color: #e6f1ea; }
    .logo { display: flex; align-items: center; gap: 4px; width: 319px; font: 700 38px/44px Lato, sans-serif; }
    .logo i { font-style: normal; border: 5px solid #e6f1ea; height: 51px; width: 50px; display: flex; align-items: center; justify-content: center; font-size: 34px; font-weight: 400; }
    .crumb { display: flex; align-items: center; gap: 11px; color: #03501f; }
    .sep { margin: 0 23px 0 29px; }
    .sep.tight { margin: 0 6px 0 23px; }
    .picker { display: flex; align-items: center; justify-content: space-between; width: 358px; height: 56px; padding: 0 31px 0 24px; border-radius: 4px; background: #fdfdfd; color: #0067df; font-weight: 500; box-shadow: 4px 6px 12px rgba(0, 0, 0, 0.25); }
    .tools { margin-left: auto; display: flex; align-items: center; gap: 30px; }
    .avatar { width: 53px; height: 53px; margin-left: -8px; border-radius: 50%; background: #dd3c12; color: #fff; font-weight: 700; }
    .body { display: flex; flex: 1; min-height: 0; }
    aside { width: 330px; flex: none; background: #fdfdfd; border-right: 1px solid #ccd3d7; display: flex; flex-direction: column; padding-top: 10px; overflow: hidden; }
    .link { display: flex; align-items: center; gap: 13px; height: 61px; padding-left: 39px; font-size: 19px; font-weight: 500; flex: none; }
    .rule { height: 1px; flex: none; background: #d4d7d9; margin: 11px 5px 0 0; }
    h2 { margin: 12px 0 0 15px; font: 18px/28px Roboto, sans-serif; color: #7c848b; }
    .fsearch { display: flex; gap: 12px; padding: 14px 20px 0 39px; height: 57px; align-items: center; flex: none; }
    .fsearch label { flex: 1; display: flex; align-items: center; height: 42px; border-bottom: 2px solid #d9dbdc; color: #d0d3d5; padding-right: 10px; }
    .fsearch input { width: 100%; min-width: 0; font: italic 20px/28px Roboto, sans-serif; color: #6b737a; outline: none; }
    .fsearch input::placeholder, .find input::placeholder { color: #6b737a; opacity: 1; }
    .tree { display: flex; flex: 1; min-height: 0; margin-top: 14px; padding-right: 5px; }
    .tree ul { flex: 1; list-style: none; margin: 0; padding: 0; overflow: hidden; min-width: 0; }
    .tree li { height: 60px; }
    .tree button { width: 100%; height: 60px; display: flex; align-items: center; text-align: left; white-space: nowrap; font-size: 19px; font-weight: 500; padding-left: 14px; }
    .tree .muted { color: #899096; font-weight: 400; }
    .tree .selected { background: #dcdddd; }
    .lv1 { margin-left: 33px; } .lv2 { margin-left: 66px; } .lv3 { margin-left: 99px; }
    .tw { width: 25px; flex: none; color: #7c848b; }
    .tree .t { margin-left: 12px; }
    .node { display: flex; align-items: center; }
    .scroll { width: 12px; border-radius: 6px; background: #e3e8ec; }
    .scroll div { height: 94%; border-radius: 6px; background: #b3b8bb; }
    main { flex: 1; min-width: 0; display: flex; flex-direction: column; }
    nav { display: flex; height: 86px; flex: none; background: #fdfdfd; border-bottom: 2px solid #d9dee1; color: #6b737a; }
    nav a { min-width: 150px; padding: 14px 15px 0; display: flex; flex-direction: column; align-items: center; gap: 8px; }
    nav a.on { color: #0067df; border-bottom: 4px solid #0067df; }
    nav a.on span { color: #273139; }
    nav a.off { color: #b4b9bd; }
    nav .ico { margin: 1px 0; }
    .pills { display: flex; gap: 30px; padding: 30px 30px 0; font-size: 18px; }
    .pill { display: flex; align-items: center; gap: 9px; height: 48px; border-radius: 24px; padding: 0 15px 0 12px; background: #fdfdfd; border: 1px solid #dadfe2; }
    .pill.on { background: #484f55; color: #fff; font-weight: 500; border-color: #484f55; }
    .filters { display: flex; align-items: center; height: 60px; margin: 20px 30px 0; padding-left: 25px; }
    .find { width: 210px; height: 50px; margin-left: 26px; display: flex; align-items: center; border-bottom: 2px solid #c6cbce; padding-right: 5px; }
    .find input { width: 100%; min-width: 0; font: 24px/30px Roboto, sans-serif; color: #6b737a; outline: none; }
    .trigger { display: flex; align-items: center; gap: 5px; margin-left: 38px; font-size: 19px; }
    .trigger b { font-weight: 500; }
    .trigger .ico { margin-left: 9px; }
    .card { position: relative; margin: 18px 30px 0; background: #fdfdfd; border-radius: 6px; box-shadow: 0 1px 3px rgba(60, 64, 67, 0.7); }
    .fab { position: absolute; right: 60px; top: -32px; width: 60px; height: 60px; border-radius: 50%; background: #0067df; color: #fff; display: flex; align-items: center; justify-content: center; box-shadow: 0 4px 12px rgba(0, 0, 0, 0.35); }
    table { width: 100%; table-layout: fixed; border-collapse: collapse; }
    th, td { text-align: left; padding: 0; border-bottom: 2px solid #dde0e2; height: 72px; white-space: nowrap; color: #6b737a; font-weight: 400; font-size: 20px; }
    th { height: 83px; font-size: 18px; font-weight: 500; color: #484f55; }
    .sel { width: 83px; padding-left: 25px; }
    .end { width: 70px; padding-left: 20px; }
    .hd { display: flex; align-items: center; }
    .hd .sortb { margin-left: auto; margin-right: 14px; }
    .hd .sortb.near { margin-left: 8px; margin-right: auto; }
    .hd .grip { width: 15px; height: 24px; margin-right: 18px; }
    .hd .grip.push { margin-left: auto; }
    input[type="checkbox"] { appearance: none; display: block; width: 25px; height: 25px; border: 3px solid #484f55; border-radius: 3px; }
    td.strong { font-weight: 500; color: #484f55; }
    td.proc { padding-left: 5px; }
    td button, th button { display: block; }
    td.end { padding-left: 18px; }
    td button { color: #484f55; }
    .foot { display: flex; align-items: center; height: 83px; padding-right: 25px; justify-content: flex-end; font-size: 18px; color: #6b737a; }
    .size { display: flex; align-items: center; width: 84px; margin: 4px 54px 0 12px; border-bottom: 2px solid #dadcde; padding-bottom: 4px; height: 36px; }
    .size select { appearance: none; width: 100%; outline: none; font-size: 19px; }
    .size .ico { margin-left: -22px; pointer-events: none; color: #5f676e; }
    .pager { display: flex; gap: 36px; margin-left: 66px; color: #b9bfc5; }
  `];
  render() {
    const nav: [string, string, string][] = [
      ["home", "Home", ""], ["automations", "Automations", ""], ["monitoring", "Monitoring", ""],
      ["queues", "Queues", "on"], ["assets", "Assets", ""], ["storage", "Storage Buckets", ""],
      ["catalogs", "Action Catalogs", "off"], ["gear", "Settings", ""],
    ];
    return html`
      <header>
        <a class="logo" href="#"><i>Ui</i>Path</a>
        <a class="crumb" href="#">${ico("folderFill", "s30")}USPHC</a>
        <span class="sep">${ico("right", "s24")}</span>
        <button aria-label="More folders">${ico("dots", "s26")}</button>
        <span class="sep tight">${ico("right", "s24")}</span>
        <button class="picker">COR089_BusinessSystem...${ico("caret", "s14")}</button>
        <div class="tools">
          <button aria-label="Help">${ico("help", "s30")}</button>
          <button aria-label="Notifications">${ico("bell", "s30")}</button>
          <button class="avatar">KC</button>
        </div>
      </header>
      <div class="body">
        <aside>
          <a class="link" href="#">${ico("globe", "s30")}Tenant</a>
          <a class="link" href="#">${ico("actions", "s30")}Actions</a>
          <div class="rule"></div>
          <h2>MY FOLDERS</h2>
          <div class="fsearch">${ico("folderTarget", "s30")}
            <label><input aria-label="Search folders" placeholder="Search">${ico("search", "s24")}</label>
          </div>
          <div class="tree">
            <ul>
              ${tree.map(([lv, name, kind, open]) => html`<li><button class=${kind}>
                <span class="node lv${lv}"><span class="tw">${open ? ico("down", "s16") : nothing}</span>
                ${ico(kind === "selected" ? "folderUser" : "folder", "s30")}<span class="t">${name}</span></span></button></li>`)}
            </ul>
            <div class="scroll"><div></div></div>
          </div>
        </aside>
        <main>
          <nav>${nav.map(([i, t, c]) => html`<a class=${c} href="#">${ico(i, "s26")}<span>${t}</span></a>`)}</nav>
          <div class="pills">
            <button class="pill on">${ico("queues", "s24")}Queues</button>
            <button class="pill">${ico("review", "s24")}Review Requests</button>
          </div>
          <div class="filters">
            <button aria-label="Columns">${ico("columns", "s26")}</button>
            <label class="find"><input aria-label="Search queues" placeholder="Search">${ico("search", "s26")}</label>
            <button class="trigger"><b>Has Trigger:</b> All ${ico("down", "s24")}</button>
          </div>
          <section class="card">
            <button class="fab" aria-label="Add queue">${ico("thinPlus", "s24")}</button>
            <table>
              <colgroup><col class="sel">
                ${columns.map((c) => html`<col style=${c.width ? `width:${c.width}px` : ""}>`)}
                <col class="end"></colgroup>
              <thead><tr>
                <th class="sel"><input type="checkbox" aria-label="Select all"></th>
                ${columns.map((c, n) => {
                  const near = n === 0 || n === 4 || n === 8;
                  return html`<th><div class="hd">${c.label}
                  ${c.sort ? html`<button class="sortb ${near ? "near" : ""}" aria-label="Sort by ${c.label}">${ico(c.sort, c.sort === "up" ? "s16" : "s20")}</button>` : nothing}
                  ${n < 8 ? html`<svg class=${classMap({ grip: true, push: !c.sort })} viewBox="0 0 15 24"><g fill="#e1e4e6">${[2, 12, 22].map((y) => svg`<circle cx="3" cy=${y} r="2.500"/><circle cx="12" cy=${y} r="2.500"/>`)}</g></svg>` : nothing}
                  </div></th>`;
                })}
                <th class="end"><button aria-label="Refresh">${ico("reload", "s26")}</button></th>
              </tr></thead>
              <tbody>${queues.map((q) => html`<tr>
                <td class="sel"><input type="checkbox" aria-label="Select ${q.name}"></td>
                <td class="strong">${q.name}</td><td></td><td>${q.inProgress}</td><td>${q.remaining}</td>
                <td>${q.average}</td><td>${q.success}</td><td class="strong">${q.app}</td><td class="strong">${q.biz}</td>
                <td class="proc">${ico("bolt", "s26")}</td>
                <td class="end"><button aria-label="Row menu">${ico("kebab", "s30")}</button></td></tr>`)}</tbody>
            </table>
            <div class="foot">
              <label for="pageSize">Items</label>
              <div class="size"><select id="pageSize"><option>10</option></select>${ico("caret", "s18")}</div>
              <span>1 - 3 / 3</span>
              <div class="pager">${["first", "left", "right", "last"].map((i) => html`<button aria-label="${i} page">${ico(i, "s24")}</button>`)}</div>
            </div>
          </section>
        </main>
      </div>`;
  }
}

/* ---------------------------------------------------------------- taskbar */

@customElement("task-bar")
export class TaskBar extends LitElement {
  @property({ type: Boolean, reflect: true }) compact = false;
  static styles = [base, css`
    :host { display: flex; height: 60px; flex: none; background: linear-gradient(90deg, #243a43, #22343f 50%, #1b2742); color: #fff; font: 17px/27px "Open Sans", sans-serif; }
    :host([compact]) { height: 40px; font-size: 11px; line-height: 18px; }
    .apps { display: flex; }
    button.app { width: 75px; height: 60px; display: flex; align-items: center; justify-content: center; }
    .bar { position: relative; display: flex; width: 75px; justify-content: center; }
    .bar.sys, .bar.sys button { width: 73px; }
    .run::after { content: ""; position: absolute; bottom: 0; left: 7px; right: 7px; height: 3px; background: #76b9ed; }
    .cur { background: #4d616b; }
    .cur::after { left: 0; right: 0; }
    :host([compact]) .bar, :host([compact]) .bar button { width: 49px; height: 40px; }
    :host([compact]) .run::after { height: 2px; left: 4px; right: 4px; }
    :host([compact]) .cur::after { left: 0; right: 0; }
    .right { margin-left: auto; display: flex; align-items: center; padding-right: 15px; }
    .clock { text-align: right; }
    :host([compact]) .right { padding-right: 3px; gap: 9px; }
    :host([compact]) .clock { text-align: center; margin: 0 9px 0 3px; }
    .wx { display: flex; gap: 9px; font-size: 13px; margin-right: 7px; }
    .bell { position: relative; margin-right: 13px; }
    .badge { position: absolute; left: 7px; top: 6px; width: 16px; height: 16px; border-radius: 50%; background: #3a424c; border: 1px solid #aaa; font-size: 11px; line-height: 14px; text-align: center; }
    .peek { width: 1px; height: 40px; background: #55606c; }
  `];
  render() {
    const c = this.compact;
    const s = c ? "s24" : "s36";
    const g = c ? "s16" : "s24";
    const items: [string, string][] = [
      ["explorer", "run"], ["outlook", "run"], ["chrome", "run"], ["swirl", ""], ["edge", ""],
      ["excel", "run cur"], ["assistant", "run"], ["player", "run"],
    ];
    return html`
      <div class="apps">
        ${["win", "searchThin", "taskview"].map((i) => html`<div class="bar sys"><button class="app" aria-label=${i}>${ico(i, g)}</button></div>`)}
        ${items.map(([i, k]) => html`<div class="bar ${k}"><button class="app" aria-label=${i}>${ico(i, s)}</button></div>`)}
      </div>
      <div class="right">
        ${c ? html`<span class="wx"><span>43°F</span><span>Mostly cloudy</span></span>${ico("up", "s12")}
          ${ico("trayTeams", "s16")}${ico("trayShield", "s16")}${ico("battery", "s16")}${ico("network", "s16")}${ico("mute", "s16")}` : nothing}
        <div class="clock">11:04 AM<br>5/4/2022</div>
        ${c ? html`<div class="bell">${ico("notif", "s16")}<span class="badge">1</span></div><div class="peek"></div>` : nothing}
      </div>`;
  }
}

/* ------------------------------------------------------------------ excel */

const sheet: [string, string][] = [
  ["425718701875", "AEAG-M"], ["41800162S06XX4", "AEPT-M"], ["N03318701750-375B", "ABAZ-M"],
  ["427431202500-500B", "ABAY-M"], ["420818700437", "AHBI-M"], ["4274840904437", "ADWU-M"],
  ["4180850601875", "AUWD-M"], ["N283840601500", "ALEY-M"], ["4208A2735", "9ZW-M"],
  ["426325004000-329B-WD", "ABMM-M"], ["425718702000", "AJDC-M"], ["4274850602375", "ACZM-M"],
  ["426312501375-250", "AAFM-M"], ["4208840601500", "ALEY-M"], ["4008P15J11504", "AUBN-M"],
  ["426325003375-375B", "AGJU-M"], ["426325006000-375B", "AJBL-M"], ["426337505500-625B-WD", "AQGO-M"],
  ["4208850906437-GD", "ATXM-M"], ["420818701062", "5NE-M"], ["420825003500-250B", "AEUM-M"],
  ["420812500625-250B", "ACHQ-M"], ["426318701875-375B", "APTA-M"], ["4182840602000-YD", "AMIW-M"],
  ["4283P84J6077", "AMZD-M"], ["420818704125", "AAGV-M"], ["4274UC25003750-375B", "AESB-M"],
  ["4008P15J11528", "AUBQ-M"], ["426337504750-625B", "6SB-M"], ["4208850401000", "AVKH-M"],
  ["4180850905000", "AQSM-M"], ["4180840602375", "ALRJ-M"], ["420831201375", "8TI-M"],
  ["425725001500", "7GT-M"], ["426325001250", "ARNO-M"],
];

const sheetCols: [string, number][] = [
  ["A", 199], ["B", 86], ["C", 146], ["D", 64], ["E", 64], ["F", 199], ["G", 64], ["H", 64],
  ["I", 64], ["J", 64], ["K", 64], ["L", 64], ["M", 64],
];

@customElement("excel-window")
export class ExcelWindow extends LitElement {
  static styles = [base, css`
    :host { display: flex; flex-direction: column; background: #262626; border: 1px solid #6e6e6e; color: #f3f2f1; font: 11px/16px "Open Sans", sans-serif; box-shadow: 0 2px 12px rgba(0, 0, 0, 0.45); white-space: nowrap; }
    .title { display: flex; align-items: center; height: 34px; flex: none; background: #0a0a0a; padding-left: 20px; }
    .title > .ico { margin-right: 8px; }
    .auto { width: 57px; }
    .toggle { display: flex; align-items: center; gap: 6px; width: 38px; height: 16px; margin-right: 13px; border: 1px solid #fff; border-radius: 8px; font-size: 10px; padding-left: 4px; line-height: 14px; }
    .toggle i { width: 8px; height: 8px; border-radius: 50%; background: #fff; }
    .dim { color: #5c5c5c; }
    .history { display: flex; align-items: center; gap: 2px; margin: 0 5px; }
    .file { margin-left: 26px; display: flex; align-items: center; gap: 8px; width: 261px; }
    .search { display: flex; align-items: center; gap: 13px; width: 345px; height: 24px; padding-left: 20px; background: #363636; }
    .search input { flex: 1; min-width: 0; outline: none; }
    .search input::placeholder { color: #f3f2f1; opacity: 1; }
    .who { margin-left: auto; display: flex; align-items: center; gap: 11px; margin-right: 11px; }
    .kj { width: 24px; height: 24px; border-radius: 50%; background: #8764b8; display: flex; align-items: center; justify-content: center; font-size: 10px; }
    .title > button { width: 46px; display: flex; justify-content: center; }
    .title > button.toggle { width: 38px; justify-content: flex-start; }
    .menu { display: flex; align-items: center; height: 32px; flex: none; background: #31302e; gap: 30px; padding: 0 12px 0 17px; font-size: 12px; }
    .menu .tab { height: 28px; line-height: 28px; margin-top: 4px; }
    .menu .on { font-weight: 700; border-bottom: 3px solid #fff; line-height: 25px; }
    .menu .right { margin-left: auto; display: flex; gap: 8px; }
    .menu .right button { display: flex; align-items: center; gap: 4px; height: 24px; padding: 0 8px; border: 1px solid #605e5c; border-radius: 2px; background: #484644; font-weight: 600; }
    .ribbon { display: flex; height: 95px; flex: none; background: #31302e; box-shadow: 0 2px 4px #1a1a1a; position: relative; }
    .group { display: flex; flex-direction: column; border-right: 1px solid #484644; margin: 2px 0 5px; }
    .gb { display: flex; height: 74px; }
    .gl { height: 18px; display: flex; align-items: center; justify-content: center; line-height: 16px; position: relative; }
    .gl .ico { position: absolute; right: 4px; top: 4px; }
    .g1 { width: 95px; } .g2 { width: 232px; } .g3 { width: 182px; } .g4 { width: 157px; }
    .g5 { width: 193px; } .g6 { width: 94px; } .g7 { width: 143px; } .g8 { width: 62px; }
    .rows { display: flex; flex-direction: column; gap: 8px; padding: 7px 0 0 8px; }
    .rows.flush { padding-left: 4px; margin-right: 5px; }
    .row { display: flex; align-items: center; height: 24px; gap: 2px; }
    .row.tight { gap: 0; }
    .b { width: 22px; height: 23px; display: flex; align-items: center; justify-content: center; font-size: 14px; color: #d8d6d4; flex: none; }
    .b.sel { background: #5f5d5b; border: 1px solid #8a8886; }
    .big-t { font-size: 18px; }
    .c { width: 12px; display: flex; justify-content: center; flex: none; }
    .vs { width: 1px; height: 26px; margin: 0 3px 0 6px; background: #484644; flex: none; }
    .vs.tall { height: 66px; margin: 5px 0 0 auto; }
    .drop { position: relative; display: flex; align-items: center; border: 1px solid #797775; height: 23px; background: #3b3a38; }
    .drop select { appearance: none; width: 100%; height: 20px; padding: 0 2px; outline: none; }
    .drop .ico { position: absolute; right: 3px; pointer-events: none; }
    .w123 { width: 123px; } .w43 { width: 43px; } .w140 { width: 140px; }
    .big { display: flex; flex-direction: column; align-items: center; padding-top: 4px; text-align: center; }
    .big .pic { height: 33px; display: flex; align-items: center; }
    .big .ico { display: inline-block; }
    .paste { width: 48px; margin-left: 5px; }
    .even { justify-content: space-evenly; }
    .stack { display: flex; flex-direction: column; height: 69px; }
    .stack button { display: flex; align-items: center; gap: 3px; height: 23px; }
    .stack.cells { padding-left: 12px; }
    .formula { display: flex; height: 45px; flex: none; align-items: center; gap: 3px; padding: 0 5px 0 4px; }
    .formula > * { height: 26px; background: #383838; border: 1px solid #444; display: flex; align-items: center; font-size: 12px; }
    .name { width: 102px; padding: 0 6px; justify-content: space-between; }
    .formula .dot { width: 24px; border: 0; background: none; justify-content: center; }
    .fx { width: 110px; justify-content: space-between; padding: 0 13px; color: #6a6a6a; }
    .fx i { color: #e0e0e0; font: italic 15px "Liberation Serif", serif; }
    .formula .val { flex: 1; min-width: 0; padding: 0 6px 0 11px; }
    .val input { flex: 1; min-width: 0; outline: none; }
    .area { display: flex; flex: 1; min-height: 0; }
    .grid { flex: 1; min-width: 0; overflow: hidden; background: #fff; border-right: 1px solid #8a8a8a; }
    table { border-collapse: separate; border-spacing: 0; table-layout: fixed; width: 100%; font: 12px/19px "Noto Sans", "Open Sans", sans-serif; color: #000; }
    th, td { padding: 0; height: 20px; font-weight: 400; }
    th { background: #262626; color: #ccc; }
    thead th { height: 21px; border-right: 1px solid #4a4a4a; border-bottom: 1px solid #999; }
    thead th.cur { background: #666; border-bottom: 2px solid #217346; color: #fff; line-height: 18px; }
    thead th .ico { margin-left: auto; margin-right: 3px; }
    tbody th { border-bottom: 1px solid #555; border-right: 1px solid #999; }
    tbody th.cur { background: #666; color: #fff; }
    td { padding-left: 3px; }
    td.cur { outline: 2px solid #217346; outline-offset: -2px; }
    .vs-bar { width: 21px; display: flex; flex-direction: column; align-items: center; padding-top: 3px; }
    .vs-bar > div { width: 14px; background: #3a3a3a; display: flex; flex-direction: column; justify-content: space-between; flex: 1; }
    .sb { height: 14px; width: 14px; background: #555; color: #999; display: flex; align-items: center; justify-content: center; }
    .thumb { height: 16px; background: #555; margin-bottom: 2px; }
    .sheets { display: flex; align-items: center; height: 28px; flex: none; padding: 0 21px 0 24px; border-top: 1px solid #888; color: #999; }
    .sheets > .ico { margin-right: 18px; }
    .sheets .tab { padding: 0 15px 0 14px; height: 25px; margin-bottom: 2px; color: #e0e0e0; border-left: 1px solid #777; margin-left: 19px; font-size: 12px; }
    .sheets .tab.on { background: #fff; color: #217346; font-weight: 700; padding: 0 12px; margin-left: 0; border: 0; border-bottom: 2px solid #217346; }
    .sheets .add { margin-left: 36px; }
    .hs { margin-left: auto; display: flex; align-items: center; gap: 2px; height: 14px; width: 491px; background: #3a3a3a; }
    .hs .ht { height: 14px; flex: 1; margin-right: 37px; background: #555; }
    .hs .k { margin-left: -2px; padding-right: 9px; color: #ddd; background: #262626; height: 14px; }
    .status { display: flex; align-items: center; height: 22px; flex: none; background: #31302e; border-top: 1px solid #444; padding-left: 7px; padding-right: 19px; }
    .status .disp { margin-left: auto; display: flex; align-items: center; gap: 4px; margin-right: 17px; }
    .view { width: 40px; height: 21px; display: flex; align-items: center; justify-content: center; }
    .view.on { background: #5f5d5b; }
    .rec { margin-left: 19px; }
    .zoom { display: flex; align-items: center; gap: 4px; margin: 0 16px 0 4px; }
    .zoom input { appearance: none; width: 100px; height: 12px; outline: none; background: linear-gradient(#fff, #fff) no-repeat center / 100% 1px; }
    .zoom input::-webkit-slider-thumb { appearance: none; width: 6px; height: 11px; background: #fff; }
    .collapse { position: absolute; right: 8px; bottom: 2px; }
  `];

  private chev = html`<span class="c">${ico("down", "s8")}</span>`;

  private bigBtn(icon: string, size: string, a: string, b: string, arrow = true) {
    return html`<button class="big"><span class="pic">${ico(icon, size)}</span><span>${a}</span><span>${b}${arrow ? html` ${ico("down", "s8")}` : nothing}</span></button>`;
  }

  render() {
    const menus = ["File", "Home", "Insert", "Draw", "Page Layout", "Formulas", "Data", "Review", "View", "Developer", "Help", "Autodesk Vault", "Aras"];
    const btn = (i: string, sel = false) => html`<button class="b ${sel ? "sel" : ""}" aria-label=${i}>${ico(i, "s16")}</button>`;
    return html`
      <div class="title">
        <span class="auto">AutoSave</span><button class="toggle"><i></i>Off</button>
        ${ico("save", "s16")}
        <span class="history dim">${ico("undo", "s16")}${this.chev}</span>
        <span class="history dim">${ico("redo", "s16")}${this.chev}</span>
        ${ico("touch", "s18")}${ico("down", "s8")}${ico("qat", "s10")}
        <span class="file">Customer_and_Product_Data.xl... <span>-</span><span>Saved</span>${ico("caret", "s8")}</span>
        <label class="search">${ico("searchThin", "s16")}<input aria-label="Search" placeholder="Search"></label>
        <span class="who">Karis J Courey<span class="kj">KJ</span></span>
        ${["ribbonMode", "min", "max", "thinX"].map((i) => html`<button aria-label=${i}>${ico(i, "s12")}</button>`)}
      </div>
      <div class="menu">
        ${menus.map((m) => html`<button class=${classMap({ tab: true, on: m === "Home" })}>${m}</button>`)}
        <div class="right"><button>${ico("share", "s12")}Share</button><button>${ico("comment", "s14")}Comments</button></div>
      </div>
      <div class="ribbon">
        <div class="group g1"><div class="gb">
          <button class="big paste"><span class="pic">${ico("paste", "s30")}</span><span>Paste</span>${ico("down", "s8")}</button>
          <div class="stack">
            <button aria-label="Cut">${ico("cut", "s18")}</button><button aria-label="Copy">${ico("copy", "s18")}${ico("down", "s8")}</button><button aria-label="Format painter">${ico("painter", "s18")}</button>
          </div></div><div class="gl">Clipboard${ico("launcher", "s10")}</div></div>
        <div class="group g2"><div class="gb"><div class="rows">
          <div class="row">
            <span class="drop w123"><select aria-label="Font"><option>Calibri</option></select>${ico("down", "s8")}</span>
            <span class="drop w43"><select aria-label="Font size"><option>11</option></select>${ico("down", "s8")}</span>
            ${btn("growA")}${btn("shrinkA")}
          </div>
          <div class="row tight">
            <button class="b"><b>B</b></button><button class="b"><i>I</i></button><button class="b"><u>U</u></button>${this.chev}
            <span class="vs"></span>${btn("borders")}${this.chev}<span class="vs"></span>${btn("fill")}${this.chev}
            ${btn("fontColor")}${this.chev}
          </div></div></div><div class="gl">Font${ico("launcher", "s10")}</div></div>
        <div class="group g3"><div class="gb">
          <div class="rows">
            <div class="row">${btn("alTop")}${btn("alMid")}${btn("alBot", true)}${btn("orient")}${this.chev}</div>
            <div class="row">${btn("alLeft", true)}${btn("alCenter")}${btn("alRight")}${btn("outdent")}${btn("indent")}</div>
          </div><span class="vs tall"></span>
          <div class="rows flush"><div class="row">${btn("wrap")}</div><div class="row">${btn("merge")}${this.chev}</div></div>
          </div><div class="gl">Alignment${ico("launcher", "s10")}</div></div>
        <div class="group g4"><div class="gb"><div class="rows">
          <div class="row"><span class="drop w140"><select aria-label="Number format"><option>Number</option></select>${ico("down", "s8")}</span></div>
          <div class="row"><button class="b big-t">$</button>${this.chev}<button class="b big-t">%</button><button class="b big-t"><b>,</b></button>
            <span class="vs"></span>${btn("incDec")}${btn("decDec")}</div>
          </div></div><div class="gl">Number${ico("launcher", "s10")}</div></div>
        <div class="group g5"><div class="gb even">
          ${this.bigBtn("condFmt", "s26", "Conditional", "Formatting")}
          ${this.bigBtn("fmtTable", "s26", "Format as", "Table")}
          ${this.bigBtn("cellStyles", "s26", "Cell", "Styles")}
          </div><div class="gl">Styles</div></div>
        <div class="group g6"><div class="gb"><div class="stack cells">
          <button>${ico("insCells", "s16")}Insert${this.chev}</button>
          <button>${ico("delCells", "s16")}Delete${this.chev}</button>
          <button>${ico("fmtCells", "s16")}Format${this.chev}</button></div></div><div class="gl">Cells</div></div>
        <div class="group g7"><div class="gb even">
          <div class="stack"><button aria-label="Sum">${ico("sum", "s16")}${this.chev}</button><button aria-label="Fill">${ico("fillDown", "s16")}${this.chev}</button><button aria-label="Clear">${ico("eraser", "s16")}${this.chev}</button></div>
          ${this.bigBtn("sortFilter", "s26", "Sort &", "Filter")}
          ${this.bigBtn("find", "s28", "Find &", "Select")}
          </div><div class="gl">Editing</div></div>
        <div class="group g8"><div class="gb even">${this.bigBtn("analyze", "s30", "Analyze", "Data", false)}</div><div class="gl">Analysis</div></div>
        <button class="collapse" aria-label="Collapse ribbon">${ico("up", "s10")}</button>
      </div>
      <div class="formula">
        <button class="name">A6830${ico("caret", "s8")}</button>
        <span class="dot">${ico("kebab", "s12")}</span>
        <span class="fx">${ico("cancel", "s12")}${ico("check", "s14")}<i>fx</i></span>
        <label class="val"><input aria-label="Formula" value="426325001250">${ico("down", "s8")}</label>
      </div>
      <div class="area">
        <div class="grid"><table>
          <colgroup><col style="width:32px">${sheetCols.map(([, w]) => html`<col style="width:${w}px">`)}<col></colgroup>
          <thead><tr><th>${ico("selectAll", "s12")}</th>${sheetCols.map(([n]) => html`<th class=${n === "A" ? "cur" : ""}>${n}</th>`)}<th></th></tr></thead>
          <tbody>
            ${sheet.map(([a, b], n) => {
              const cur = n === sheet.length - 1 ? "cur" : "";
              return html`<tr><th class=${cur}>${6796 + n}</th><td class=${cur}>${a}</td><td>${b}</td><td>PKG-SLC Business Unit</td><td colspan="11"></td></tr>`;
            })}
            <tr><th>6831</th><td colspan="14"></td></tr>
          </tbody></table></div>
        <div class="vs-bar"><div><span class="sb">${ico("caretUp", "s8")}</span><span><div class="thumb"></div><span class="sb">${ico("caret", "s8")}</span></span></div></div>
      </div>
      <div class="sheets">
        ${ico("caretLeft", "s10")}${ico("caretRight", "s10")}
        <button class="tab">SLC_Customers</button><button class="tab on">SLC_Products</button>
        <button class="add" aria-label="New sheet">${ico("addSheet", "s16")}</button>
        <div class="hs"><span class="k">${ico("kebab", "s12")}</span><span class="sb">${ico("caretLeft", "s8")}</span><span class="ht"></span><span class="sb">${ico("caretRight", "s8")}</span></div>
      </div>
      <div class="status">
        Ready<span class="rec">${ico("macro", "s14")}</span>
        <button class="disp">${ico("display", "s14")}Display Settings</button>
        <button class="view on" aria-label="Normal view">${ico("vNormal", "s14")}</button>
        <button class="view" aria-label="Page layout view">${ico("vLayout", "s14")}</button>
        <button class="view" aria-label="Page break view">${ico("vBreak", "s14")}</button>
        <label class="zoom">${ico("min", "s10")}<input type="range" aria-label="Zoom" value="50">${ico("thinPlus", "s10")}</label>
        100%
      </div>`;
  }
}

/* ---------------------------------------------------------------- desktop */

const shortcuts: ([string, string, string] | null)[][] = [
  [["emg", "EMG IT", "Service Portal"], ["teams", "Microsoft", "Teams"], ["datalyzer", "DataLyzer", "Spectrum"], ["sap", "SAP Logon", ""], ["engage", "Minitab", "Engage"], ["github", "GitHub", "Desktop"]],
  [["bin", "Recycle Bin", ""], ["selfservice", "Self Service", ""], ["invPro", "Autodesk", "Inventor P..."], ["zoom", "Zoom", ""], ["design", "Autodesk", "Design ..."], ["forti", "FortiClient", "VPN"]],
  [["att", "AT&T Global", "Network C..."], ["edge", "Genusus", ""], ["dwg", "DWG", "TrueVie..."], ["postman", "Postman", ""], ["invView", "Autodesk", "Inventor Vie..."], ["folderDocs", "Virtual", "Backgrounds"]],
  [["bluezone", "BlueZone", "Session M..."], ["kronos", "KRONOS", ""], ["ada", "Autodesk", "Desktop App"], ["infocenter", "InfoCenter...", ""], ["dwg", "DWG", "TrueVie..."], ["timecard", "Time Card", "Hours.xlsx"]],
  [["notes", "IBM Notes", ""], ["autocad", "AutoCAD", "2020 - E..."], ["swirl", "Mainframe", "Access E..."], ["edge", "NearHit_S...", ""], ["vault", "Autodesk", "Vault Prof..."], null],
  [["script", "IE Proxy", "On_Off.vbs"], ["minitab", "Minitab 19", ""], ["chrome", "Google", "Chrome"], ["edge", "Mainframe_...", ""], ["edge", "Microsoft", "Edge"], null],
];
const noArrow = ["bin", "folderDocs", "timecard", "script"];

@customElement("desktop-area")
export class DesktopArea extends LitElement {
  static styles = [base, css`
    :host { display: block; position: relative; overflow: hidden;
      background: radial-gradient(ellipse 1500px 1000px at 24% 74%, #00b4fd 0%, #00b0fb 42%, #009af2 62%, #0070dc 78%, #0444bd 100%) #0440b8; }
    .icons { display: grid; grid-template-columns: repeat(6, 76px); grid-auto-rows: 84px; padding-top: 7px; width: max-content; }
    .it { display: flex; flex-direction: column; align-items: center; text-align: center; color: #fff; font: 11px/15px "Open Sans", sans-serif; white-space: nowrap; text-shadow: 1px 1px 2px #000, 0 0 2px rgba(0, 0, 0, 0.8); }
    .it svg { width: 32px; height: 32px; margin-bottom: 4px; overflow: visible; }
    excel-window { position: absolute; left: 599px; top: 31px; right: 36px; bottom: 10px; }
  `];
  render() {
    return html`<div class="icons">
      ${shortcuts.flat().map((s) => s ? html`<a class="it" href="#"><svg viewBox="0 0 32 32" aria-hidden="true">${app[s[0]]}
        ${noArrow.includes(s[0]) ? nothing : svg`<rect x="0.500" y="19.500" width="12" height="12" fill="#fff" stroke="#9aa"/><path d="M3 30Q3 24 7 23.500V21.500H11V27L9 25.500Q5 26 5 30Z" fill="#2a5db0"/>`}</svg>
        <span>${s[1]}</span><span>${s[2]}</span></a>` : html`<span></span>`)}
    </div><excel-window></excel-window>`;
  }
}

/* ------------------------------------------------------------------- root */

@customElement("app-root")
export class AppRoot extends LitElement {
  static styles = css`
    :host { display: grid; grid-template-columns: 1fr 1fr; height: 100vh; background: #000; }
    .screen { display: flex; flex-direction: column; min-width: 0; min-height: 0; box-sizing: border-box; }
    .one { padding-bottom: 52px; }
    .two { padding-top: 52px; }
    orchestrator-page, desktop-area { flex: 1; min-height: 0; }
  `;
  render() {
    return html`
      <div class="screen one"><browser-chrome></browser-chrome><orchestrator-page></orchestrator-page><task-bar></task-bar></div>
      <div class="screen two"><desktop-area></desktop-area><task-bar compact></task-bar></div>`;
  }
}
